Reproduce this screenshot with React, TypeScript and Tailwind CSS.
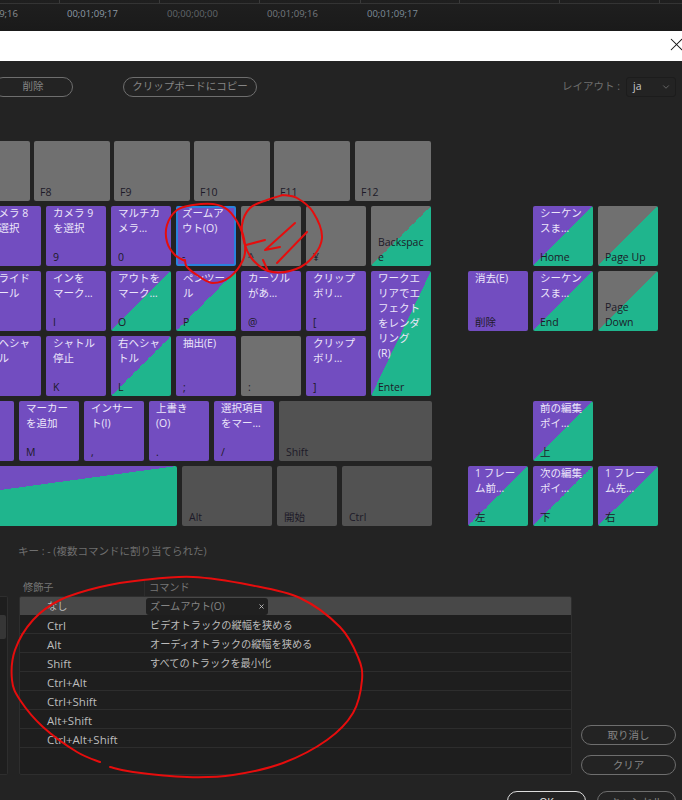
import { ChevronDown, X } from "lucide-react";

const fontStack = "font-['Open_Sans','Noto_Sans_CJK_JP',sans-serif]";

const tones = {
  purple: "bg-[#724dc0] text-[#ece6fa]",
  purpleGreen: "bg-[linear-gradient(to_bottom_right,#724dc0_50%,#1fb58d_50%)] text-[#ece6fa]",
  grey: "bg-[#707070] text-[#e0e0e0]",
  greyGreen: "bg-[linear-gradient(to_bottom_right,#707070_50%,#1fb58d_50%)] text-[#e0e0e0]",
  dark: "bg-[#525252] text-[#e0e0e0]",
};

type KeyProps = {
  lines?: string[];
  label?: string[];
  tone: keyof typeof tones;
  className?: string;
};

function Key({ lines = [], label = [], tone, className = "w-[60px] h-[60px]" }: KeyProps) {
  return (
    <div className={`flex shrink-0 flex-col justify-between overflow-hidden rounded-[2px] px-[7px] pb-[1px] text-[10.5px] leading-[15px] ${tones[tone]} ${className}`}>
      <div className="whitespace-nowrap">
        {lines.map((line) => (
          <div key={line}>{line}</div>
        ))}
      </div>
      <div className="whitespace-nowrap text-[#1d1a28]">
        {label.map((line) => (
          <div key={line}>{line}</div>
        ))}
      </div>
    </div>
  );
}

function PillButton({ children, className = "" }: { children: string; className?: string }) {
  return (
    <div className={`flex h-[20px] shrink-0 items-center justify-center rounded-full border border-[#6e6e6e] text-[10.5px] text-[#858585] ${className}`}>
      {children}
    </div>
  );
}

function TimelineBar() {
  const ticks = [59, 159, 259, 360, 459, 559, 659];
  const codes = [
    { text: "00;01;09;16", color: "text-[#8b8f93]", left: "w-[46px] ml-[-33px]" },
    { text: "00;01;09;17", color: "text-[#8d9aa6]", left: "w-[46px] ml-[54px]" },
    { text: "00;00;00;00", color: "text-[#62676b]", left: "w-[46px] ml-[54px]" },
    { text: "00;01;09;16", color: "text-[#757a7f]", left: "w-[46px] ml-[54px]" },
    { text: "00;01;09;17", color: "text-[#7d8c99]", left: "w-[46px] ml-[54px]" },
  ];
  return (
    <div className="h-[31px] shrink-0 bg-[linear-gradient(#1f1f1f,#1a1a1a)]">
      <div className="relative h-[4px] border-b border-[#343434]">
        {ticks.map((x) => (
          <div key={x} className="absolute top-0 h-[3px] w-px bg-[#3a3a3a]" style={{ left: x }} />
        ))}
      </div>
      <div className="flex h-[20px] items-center whitespace-nowrap text-[9.5px]">
        {codes.map((code, i) => (
          <div key={i} className={`shrink-0 ${code.left} ${code.color}`}>{code.text}</div>
        ))}
      </div>
    </div>
  );
}

function Toolbar() {
  return (
    <div className="flex h-[64px] shrink-0 items-start pt-[16px]">
      <PillButton className="ml-[-7px] w-[80px]">削除</PillButton>
      <PillButton className="ml-[50px] w-[134px]">クリップボードにコピー</PillButton>
      <div className="ml-auto mr-[6px] flex items-center gap-[6px]">
        <span className="text-[10.5px] text-[#6f6f6f]">レイアウト :</span>
        <div className="flex h-[20px] w-[50px] items-center justify-between rounded-[3px] border border-[#1c1c1c] bg-[#232323] pl-[6px] pr-[4px] text-[10.5px] text-[#c8c8c8]">
          ja
          <ChevronDown className="h-[10px] w-[10px] text-[#8a8a8a]" strokeWidth={1.5} />
        </div>
      </div>
    </div>
  );
}

function MainKeys() {
  return (
    <div className="flex w-[432px] shrink-0 flex-col gap-[5px]">
      <div className="ml-[-19px] flex gap-[5px]">
        <Key tone="purple" lines={["カメラ 8", "を選択"]} label={["8"]} />
        <Key tone="purple" lines={["カメラ 9", "を選択"]} label={["9"]} />
        <Key tone="purple" lines={["マルチカ", "メラ…"]} label={["0"]} />
        <Key
          tone="purple"
          lines={["ズームア", "ウト(O)"]}
          label={["-"]}
          className="h-[60px] w-[60px] border-2 border-[#2a82dc] !px-[4px] !pb-0 [&>div:first-child]:mt-[-2px]"
        />
        <Key tone="grey" label={["^"]} />
        <Key tone="grey" label={["¥"]} />
        <Key tone="greyGreen" label={["Backspac", "e"]} />
      </div>
      <div className="ml-[-19px] flex gap-[5px]">
        <div className="flex flex-col gap-[5px]">
          <div className="flex gap-[5px]">
            <Key tone="purple" lines={["スライド", "ツール"]} label={["U"]} />
            <Key tone="purple" lines={["インを", "マーク…"]} label={["I"]} />
            <Key tone="purpleGreen" lines={["アウトを", "マーク…"]} label={["O"]} />
            <Key tone="purpleGreen" lines={["ペンツー", "ル"]} label={["P"]} />
            <Key tone="purple" lines={["カーソル", "があ…"]} label={["@"]} />
            <Key tone="purple" lines={["クリップ", "ボリ…"]} label={["["]} />
          </div>
          <div className="flex gap-[5px]">
            <Key tone="purple" lines={["左ヘシャ", "トル"]} label={["J"]} />
            <Key tone="purple" lines={["シャトル", "停止"]} label={["K"]} />
            <Key tone="purpleGreen" lines={["右ヘシャ", "トル"]} label={["L"]} />
            <Key tone="purple" lines={["抽出(E)"]} label={[";"]} />
            <Key tone="grey" label={[":"]} />
            <Key tone="purple" lines={["クリップ", "ボリ…"]} label={["]"]} />
          </div>
        </div>
        <Key
          tone="purpleGreen"
          lines={["ワークエ", "リアでエ", "フェクト", "をレンダ", "リング", "(R)"]}
          label={["Enter"]}
          className="h-[125px] w-[60px]"
        />
      </div>
      <div className="ml-[-46px] flex gap-[5px]">
        <Key tone="purple" lines={["レート調", "整ツール"]} label={["N"]} className="h-[60px] w-[60px] !px-[4px]" />
        <Key tone="purple" lines={["マーカー", "を追加"]} label={["M"]} />
        <Key tone="purple" lines={["インサー", "ト(I)"]} label={[","]} />
        <Key tone="purple" lines={["上書き", "(O)"]} label={["."]} />
        <Key tone="purple" lines={["選択項目", "をマー…"]} label={["/"]} />
        <Key tone="dark" label={["Shift"]} className="h-[60px] w-[153px]" />
      </div>
      <div className="ml-[-265px] flex gap-[5px]">
        <Key tone="purpleGreen" className="h-[60px] w-[442px]" />
        <Key tone="dark" label={["Alt"]} className="h-[60px] w-[90px]" />
        <Key tone="dark" label={["開始"]} />
        <Key tone="dark" label={["Ctrl"]} className="h-[60px] w-[90px]" />
      </div>
    </div>
  );
}

function NavKeys() {
  return (
    <div className="ml-[36px] grid h-fit grid-cols-[60px_60px_60px] gap-[5px]">
      <div />
      <Key tone="purpleGreen" lines={["シーケン", "スま…"]} label={["Home"]} />
      <Key tone="greyGreen" label={["Page Up"]} />
      <Key tone="purple" lines={["消去(E)"]} label={["削除"]} />
      <Key tone="purpleGreen" lines={["シーケン", "スま…"]} label={["End"]} />
      <Key tone="greyGreen" label={["Page", "Down"]} />
      <div className="col-span-3 h-[60px]" />
      <div />
      <Key tone="purpleGreen" lines={["前の編集", "ポイ…"]} label={["上"]} />
      <div />
      <Key tone="purpleGreen" lines={["1 フレー", "ム前…"]} label={["左"]} />
      <Key tone="purpleGreen" lines={["次の編集", "ポイ…"]} label={["下"]} />
      <Key tone="purpleGreen" lines={["1 フレー", "ム先…"]} label={["右"]} />
    </div>
  );
}

function Keyboard() {
  return (
    <div className="shrink-0">
      <div className="ml-[-46px] flex gap-[4px]">
        {["F7", "F8", "F9", "F10", "F11"].map((name) => (
          <Key key={name} tone="grey" label={[name]} className="h-[60px] w-[76px] !px-[6px]" />
        ))}
        <Key tone="grey" label={["F12"]} className="ml-[1px] h-[60px] w-[76px] !px-[6px]" />
      </div>
      <div className="mt-[5px] flex">
        <MainKeys />
        <NavKeys />
      </div>
    </div>
  );
}

const modifiers = [
  { name: "Ctrl", command: "ビデオトラックの縦幅を狭める" },
  { name: "Alt", command: "オーディオトラックの縦幅を狭める" },
  { name: "Shift", command: "すべてのトラックを最小化" },
  { name: "Ctrl+Alt", command: "" },
  { name: "Ctrl+Shift", command: "" },
  { name: "Alt+Shift", command: "" },
  { name: "Ctrl+Alt+Shift", command: "" },
];

function CommandTable() {
  return (
    <div className="ml-[11px] w-[553px] shrink-0">
      <div className="flex h-[18px] items-center pt-[2px] text-[10.2px] text-[#767676]">
        <span className="w-[125px] pl-[4px]">修飾子</span>
        <span className="border-l border-[#2c2c2c] pl-[4px]">コマンド</span>
      </div>
      <div className="h-[179px] overflow-hidden rounded-[2px] border border-[#2e2e2e] bg-[#1e1e1e] text-[10.2px] text-[#bcbcbc]">
        <div className="flex h-[18px] items-center bg-[#484848]">
          <span className="w-[126px] pl-[27px] pt-[1px]">なし</span>
          <div className="flex h-[17px] w-[122px] items-center justify-between rounded-[3px] bg-[#202020] pl-[4px] pr-[3px] pt-[1px] text-[#858585]">
            ズームアウト(O)
            <X className="h-[7px] w-[7px] text-[#c4c4c4]" strokeWidth={3} />
          </div>
        </div>
        {modifiers.map((row) => (
          <div key={row.name} className="flex h-[19px] items-center border-b border-[#2d2d2d] pt-[3px]">
            <span className="w-[130px] pl-[27px] text-[11.5px]">{row.name}</span>
            <span>{row.command}</span>
          </div>
        ))}
      </div>
    </div>
  );
}

function smooth(points: number[][]) {
  let d = `M${points[0][0]} ${points[0][1]}`;
  for (let i = 0; i < points.length - 1; i++) {
    const p0 = points[Math.max(i - 1, 0)];
    const p1 = points[i];
    const p2 = points[i + 1];
    const p3 = points[Math.min(i + 2, points.length - 1)];
    const c1x = p1[0] + (p2[0] - p0[0]) / 6;
    const c1y = p1[1] + (p2[1] - p0[1]) / 6;
    const c2x = p2[0] - (p3[0] - p1[0]) / 6;
    const c2y = p2[1] - (p3[1] - p1[1]) / 6;
    d += ` C${c1x} ${c1y} ${c2x} ${c2y} ${p2[0]} ${p2[1]}`;
  }
  return d;
}

// hand drawn marks on top of the screenshot
const marks = [
  [[185, 260], [187, 267], [200, 277], [213, 283], [230, 277], [243, 260], [245, 245], [240, 227], [228, 210], [213, 204], [193, 205], [177, 210], [167, 225], [167, 242], [175, 255], [185, 261]],
  [[283, 195], [267, 200], [250, 208], [242, 225], [245, 245], [253, 260], [268, 271], [290, 271], [310, 260], [322, 238], [313, 212], [297, 198], [283, 195]],
  [[100, 762], [77, 752], [43, 727], [20, 700], [12, 680], [15, 650], [33, 620], [60, 600], [100, 587], [143, 580], [193, 577], [250, 585], [300, 598], [340, 627], [358, 657], [362, 680], [353, 713], [327, 740], [283, 763], [233, 775], [187, 777], [133, 772], [110, 767]],
];

const arrows = [
  "M265 240L246 245",
  "M295 223L265 250L280 247",
  "M307 232L277 263",
  "M263 260L268 271",
];

function Annotations() {
  return (
    <svg className="pointer-events-none absolute left-0 top-0 h-[800px] w-[682px]" viewBox="0 0 682 800" fill="none" stroke="#e60d0d" strokeWidth="2" strokeLinecap="round" strokeLinejoin="round">
      {marks.map((points, i) => (
        <path key={i} d={smooth(points)} />
      ))}
      {arrows.map((d) => (
        <path key={d} d={d} />
      ))}
    </svg>
  );
}

export default function App() {
  return (
    <div className={`relative flex h-[800px] w-full flex-col overflow-hidden bg-[#232323] ${fontStack}`}>
      <TimelineBar />
      <div className="flex h-[30px] shrink-0 items-center justify-end bg-white">
        <X className="mb-[3px] mr-[-5px] h-[21px] w-[21px] text-[#111]" strokeWidth={1.2} />
      </div>
      <Toolbar />
      <div className="shrink-0 pt-[16px]">
        <Keyboard />
      </div>
      <p className="ml-[18px] mt-[18px] h-[15px] shrink-0 text-[10.5px] leading-[15px] text-[#6f6f6f]">キー : - (複数コマンドに割り当てられた)</p>
      <div className="mt-[19px] flex shrink-0">
        <div className="mt-[18px] h-[179px] w-[8px] shrink-0 rounded-r-[2px] border-y border-r border-[#2e2e2e] bg-[#1e1e1e] pt-[18px]">
          <div className="h-[24px] w-[6px] rounded-r-[2px] bg-[#363636]" />
        </div>
        <CommandTable />
        <div className="ml-[9px] flex h-[197px] w-[95px] shrink-0 flex-col justify-end gap-[10px]">
          <PillButton className="pt-[1px]">取り消し</PillButton>
          <PillButton className="pt-[1px]">クリア</PillButton>
        </div>
      </div>
      <div className="mt-[16px] flex shrink-0 justify-end gap-[11px] pr-[6px]">
        <PillButton className="w-[79px] border-[#dcdcdc] pt-[3px] text-[#e8e8e8]">OK</PillButton>
        <PillButton className="w-[79px] pt-[3px]">キャンセル</PillButton>
      </div>
      <Annotations />
    </div>
  );
}
